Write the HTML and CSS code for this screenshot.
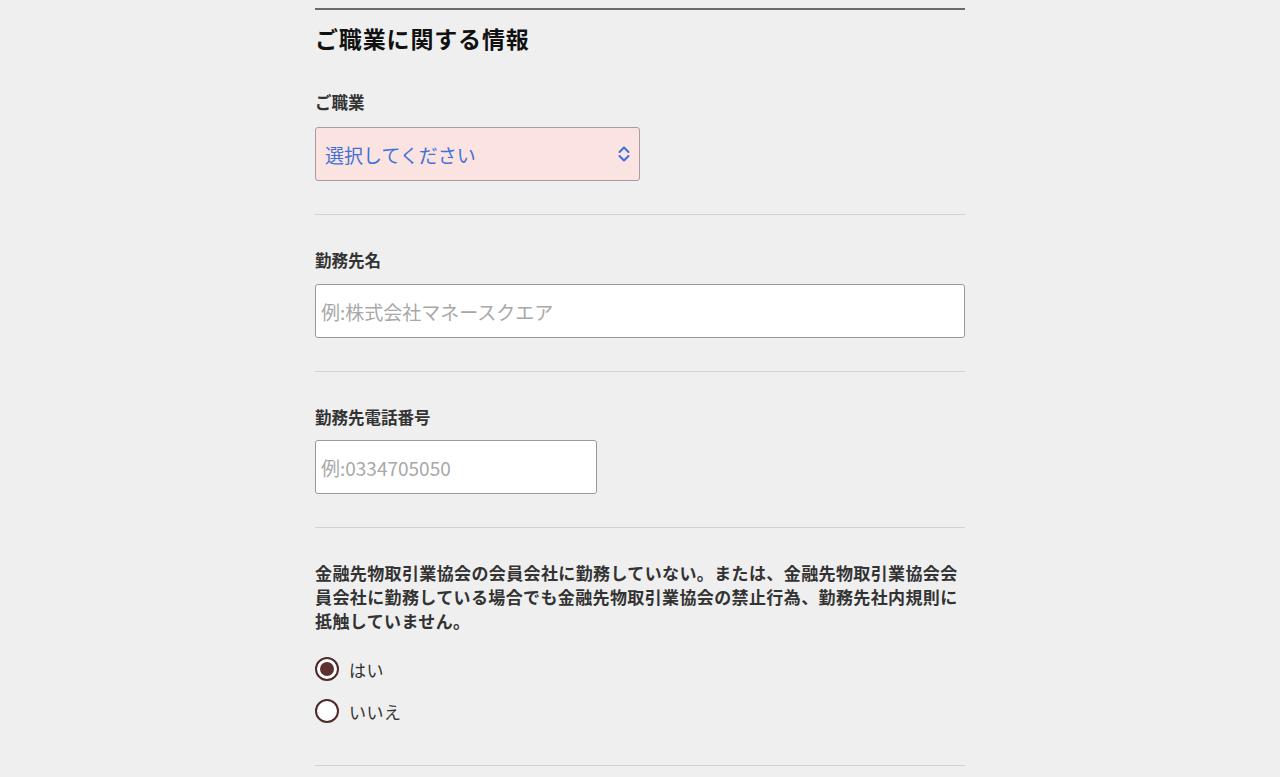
FILE: index.html
```html
<!DOCTYPE html>
<html lang="ja">
<head>
<meta charset="utf-8">
<title>ご職業に関する情報</title>
<link rel="stylesheet" href="styles.css">
</head>
<body>
<main class="page">
  <section class="section">
    <h2 class="section-title">ご職業に関する情報</h2>

    <div class="field field-first">
      <label class="field-label" for="job">ご職業</label>
      <div class="select-wrap">
        <select id="job" class="select">
          <option>選択してください</option>
        </select>
        <svg class="select-arrow" width="14" height="18" viewBox="0 0 14 18" aria-hidden="true">
          <path d="M2.5 7 L7 2.5 L11.5 7" fill="none" stroke="#3a6fd8" stroke-width="2" stroke-linecap="round" stroke-linejoin="round"/>
          <path d="M2.5 11 L7 15.5 L11.5 11" fill="none" stroke="#3a6fd8" stroke-width="2" stroke-linecap="round" stroke-linejoin="round"/>
        </svg>
      </div>
    </div>

    <div class="field field-company">
      <label class="field-label" for="company">勤務先名</label>
      <input id="company" class="input input-full" type="text" placeholder="例:株式会社マネースクエア">
    </div>

    <div class="field field-tel">
      <label class="field-label" for="tel">勤務先電話番号</label>
      <input id="tel" class="input input-half" type="text" placeholder="例:0334705050">
    </div>

    <div class="field field-radio">
      <p class="statement">金融先物取引業協会の会員会社に勤務していない。または、金融先物取引業協会会員会社に勤務している場合でも金融先物取引業協会の禁止行為、勤務先社内規則に抵触していません。</p>
      <div class="radio-group">
        <label class="radio-row"><input class="radio" type="radio" name="agree" checked><span class="radio-text">はい</span></label>
        <label class="radio-row"><input class="radio" type="radio" name="agree"><span class="radio-text">いいえ</span></label>
      </div>
    </div>
  </section>
</main>
</body>
</html>
```

FILE: styles.css
```css
* {
  box-sizing: border-box;
}

html, body {
  margin: 0;
  padding: 0;
  background: #efefef;
}

body {
  font-family: "Noto Sans CJK JP", "Noto Sans", sans-serif;
  color: #333;
}

.page {
  width: 650px;
  margin: 0 auto;
  padding-top: 8px;
}

.section {
  border-top: 2px solid #6b6b6b;
}

.section-title {
  margin: 12px 0 0;
  font-size: 23px;
  letter-spacing: 0.85px;
  line-height: 32px;
  font-weight: 700;
  color: #111;
}

.field {
  padding: 34px 0 33px;
  border-bottom: 1px solid #d2d2d2;
}

.field-first {
  padding-top: 36px;
}

.field-first .field-label {
  margin-bottom: 13px;
}

.field-company {
  padding-top: 33px;
}

.field-tel {
  padding-top: 33px;
}

.field-tel .field-label {
  margin-bottom: 11px;
}

.field-label {
  display: block;
  font-size: 16.5px;
  line-height: 24px;
  font-weight: 700;
  color: #333;
  margin-bottom: 12px;
}

.select-wrap {
  position: relative;
  width: 325px;
}

.select {
  display: block;
  width: 100%;
  height: 54px;
  -webkit-appearance: none;
  appearance: none;
  background: #fbe3e2;
  border: 1px solid #a89c9c;
  border-radius: 3px;
  padding: 0 36px 0 9px;
  font-family: inherit;
  font-size: 19px;
  color: #3f72d4;
  outline: none;
}

.select-arrow {
  position: absolute;
  right: 9px;
  top: 18px;
  pointer-events: none;
}

.input {
  display: block;
  height: 54px;
  background: #fff;
  border: 1px solid #9a9a9a;
  border-radius: 3px;
  padding: 0 5px;
  font-family: inherit;
  font-size: 19px;
  color: #333;
  outline: none;
}

.input::placeholder {
  color: #a8a8a8;
}

.input-full {
  width: 650px;
}

.input-half {
  width: 282px;
}

.field-radio {
  padding-top: 33px;
  padding-bottom: 42px;
}

.statement {
  margin: 0;
  font-size: 17px;
  letter-spacing: 0.38px;
  line-height: 24px;
  font-weight: 700;
  color: #333;
}

.radio-group {
  display: flex;
  flex-direction: column;
  gap: 18px;
  margin-top: 24px;
}

.radio-row {
  display: flex;
  align-items: center;
  gap: 10px;
  height: 24px;
}

.radio {
  -webkit-appearance: none;
  appearance: none;
  margin: 0;
  width: 24px;
  height: 24px;
  border: 2px solid #4e2a2a;
  border-radius: 50%;
  background: #fff;
  display: grid;
  place-items: center;
}

.radio:checked::after {
  content: "";
  width: 14px;
  height: 14px;
  border-radius: 50%;
  background: #5e3030;
}

.radio-text {
  font-size: 17px;
  color: #333;
  letter-spacing: 0.5px;
}
```
